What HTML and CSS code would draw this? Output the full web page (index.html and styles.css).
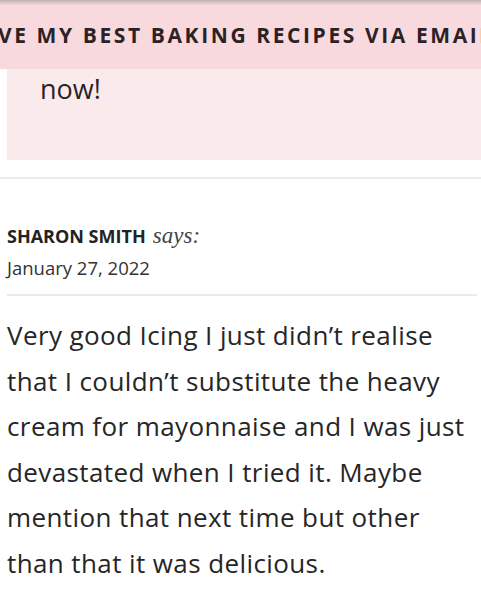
FILE: index.html
```html
<!DOCTYPE html>
<html lang="en">
<head>
    <meta charset="UTF-8">
    <meta name="viewport" content="width=device-width, initial-scale=1.0">
    <title>Comment</title>
    <link rel="stylesheet" href="styles.css">
</head>
<body>
    <div class="shade"></div>
    <div class="banner">
        <span class="banner-text">RECEIVE MY BEST BAKING RECIPES VIA EMAIL</span>
    </div>
    <section class="page">
        <div class="promo">
            <p class="promo-text">now!</p>
        </div>
        <div class="rule"></div>
        <article class="comment">
            <div class="meta">
                <span class="author">SHARON SMITH</span>
                <span class="says">says:</span>
            </div>
            <div class="date">January 27, 2022</div>
            <div class="divider"></div>
            <p class="comment-text">Very good Icing I just didn’t realise that I couldn’t substitute the heavy cream for mayonnaise and I was just devastated when I tried it. Maybe mention that next time but other than that it was delicious.</p>
        </article>
    </section>
</body>
</html>
```
FILE: styles.css
```css
body,
p{
    margin: 0;
}
body{
    background-color: #fff;
    color: #262626;
    font-family: "Open Sans", sans-serif;
    overflow: hidden;
}
.shade{
    height: 5px;
    background: linear-gradient(#bfb3b6, #f3d6da);
}
.banner{
    height: 60px;
    padding-bottom: 4px;
    background-color: #f8d9dd;
    display: flex;
    justify-content: center;
    align-items: center;
    overflow: hidden;
}
.banner-text{
    margin-right: 60px;
    white-space: nowrap;
    font-weight: 700;
    font-size: 21px;
    letter-spacing: 2.6px;
    color: #2b2225;
}
.promo{
    margin-left: 7px;
    height: 91px;
    background-color: #fbeaec;
    padding-left: 33px;
}
.promo-text{
    font-size: 27px;
    line-height: 40px;
    color: #2b2225;
}
.rule{
    margin-top: 17px;
    height: 2px;
    background-color: #ebebeb;
}
.comment{
    padding: 44px 4px 0 7px;
}
.meta{
    line-height: 26px;
}
.author{
    font-weight: 700;
    font-size: 18px;
    color: #222;
}
.says{
    margin-left: 3px;
    font-family: "Liberation Serif", serif;
    font-style: italic;
    font-size: 23px;
    color: #444;
}
.date{
    margin-top: 3px;
    font-size: 18.5px;
    line-height: 30px;
    color: #333;
}
.divider{
    margin-top: 11px;
    height: 2px;
    background-color: #ebebeb;
}
.comment-text{
    margin-top: 17px;
    font-size: 26px;
    letter-spacing: 0.4px;
    line-height: 45.5px;
    color: #262626;
}
```
